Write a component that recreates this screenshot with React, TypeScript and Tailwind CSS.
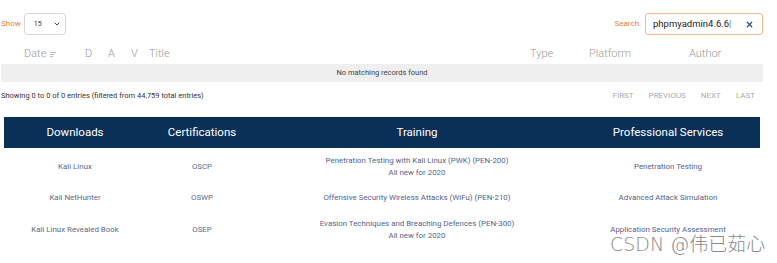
import { ChevronDown, X } from 'lucide-react';

const columns = [
  { label: 'Date', w: 'w-[61px]', sort: true },
  { label: 'D', w: 'w-[23px]' },
  { label: 'A', w: 'w-[23px]' },
  { label: 'V', w: 'w-[18px]' },
  { label: 'Title', w: 'w-[381px]' },
  { label: 'Type', w: 'w-[59px]' },
  { label: 'Platform', w: 'w-[100px]' },
  { label: 'Author', w: 'w-[60px]' },
];

const rows = [
  {
    download: 'Kali Linux',
    cert: 'OSCP',
    training: ['Penetration Testing with Kali Linux (PWK) (PEN-200)', 'All new for 2020'],
    service: 'Penetration Testing',
  },
  {
    download: 'Kali NetHunter',
    cert: 'OSWP',
    training: ['Offensive Security Wireless Attacks (WiFu) (PEN-210)'],
    service: 'Advanced Attack Simulation',
  },
  {
    download: 'Kali Linux Revealed Book',
    cert: 'OSEP',
    training: ['Evasion Techniques and Breaching Defences (PEN-300)', 'All new for 2020'],
    service: 'Application Security Assessment',
  },
];

const App = () => {
  return (
    <div className="relative w-[777px] h-[263px] overflow-hidden bg-white font-['Roboto',sans-serif]">
      <div className="w-[762px] ml-[1px]">
        {/* length + search */}
        <div className="flex items-center justify-between pt-[13px]">
          <div className="flex items-center gap-[3px]">
            <span className="text-[8px] text-[#e8843c]">Show</span>
            <div className="flex items-center justify-between w-[42px] h-[22px] border border-[#d6d6d6] rounded-[4px] pl-[9px] pr-[4px]">
              <span className="text-[7px] text-[#333]">15</span>
              <ChevronDown className="w-[8px] h-[8px] text-[#444]" strokeWidth={3} />
            </div>
          </div>
          <div className="flex items-center gap-[4px]">
            <span className="text-[8px] text-[#e8843c]">Search:</span>
            <div className="flex items-center justify-between w-[118px] h-[22px] border border-[#f2b890] rounded-[3px] pl-[7px] pr-[8px]">
              <span className="text-[9.5px] text-[#222]">phpmyadmin4.6.6<span className="font-light">|</span></span>
              <X className="w-[9px] h-[9px] text-[#2f4f80]" strokeWidth={3.5} />
            </div>
          </div>
        </div>

        {/* column headers */}
        <div className="flex items-end h-[29px] pb-[4px] pl-[23px] text-[11px] leading-[13px] font-light text-[#9a9a9a]">
          {columns.map((c) => (
            <div key={c.label} className={`${c.w} flex items-center gap-[4px]`}>
              <span>{c.label}</span>
              {c.sort && (
                <svg width="6" height="5" viewBox="0 0 6 5" className="mt-[2px]">
                  <path d="M0 0.5h6M0 2.5h4.5M0 4.5h3" stroke="#b5b5b5" strokeWidth="0.9" />
                </svg>
              )}
            </div>
          ))}
        </div>

        <div className="flex items-center justify-center h-[18px] bg-[#efefef] text-[7.5px] text-[#444]">
          No matching records found
        </div>

        <div className="flex items-center justify-between h-[28px]">
          <span className="text-[7.5px] text-[#333]">
            Showing 0 to 0 of 0 entries (filtered from 44,759 total entries)
          </span>
          <div className="flex items-center gap-[15px] pr-[8px] text-[8px] text-[#aaa]">
            <span>FIRST</span>
            <span>PREVIOUS</span>
            <span>NEXT</span>
            <span>LAST</span>
          </div>
        </div>
      </div>

      {/* footer links table */}
      <div className="ml-[4px] mt-[7px] w-[756px]">
        <div className="flex items-center h-[31px] bg-[#0b3058] text-white text-[11.5px] font-normal">
          <div className="w-[142px] text-center">Downloads</div>
          <div className="w-[112px] text-center">Certifications</div>
          <div className="w-[318px] text-center">Training</div>
          <div className="w-[184px] text-center">Professional Services</div>
        </div>
        <div className="pt-[3px]">
          {rows.map((r) => (
            <div key={r.download} className="flex items-center h-[31.5px] text-[7.9px] text-[#5b6a82] leading-[12px]">
              <div className="w-[142px] text-center">{r.download}</div>
              <div className="w-[112px] text-center">{r.cert}</div>
              <div className="w-[318px] text-center text-[#52648a]">
                {r.training.map((t) => (
                  <div key={t}>{t}</div>
                ))}
              </div>
              <div className="w-[184px] text-center text-[#52648a]">{r.service}</div>
            </div>
          ))}
        </div>
      </div>

      {/* watermark */}
      <div className="absolute left-[610px] top-[232px] text-[19px] leading-[24px] text-[#8a8a8a] font-['DejaVu_Sans','Noto_Sans_CJK_SC',sans-serif] font-light [text-shadow:0_0_2px_#fff]">
        CSDN @伟已茹心
      </div>
    </div>
  );
};

export default App;
